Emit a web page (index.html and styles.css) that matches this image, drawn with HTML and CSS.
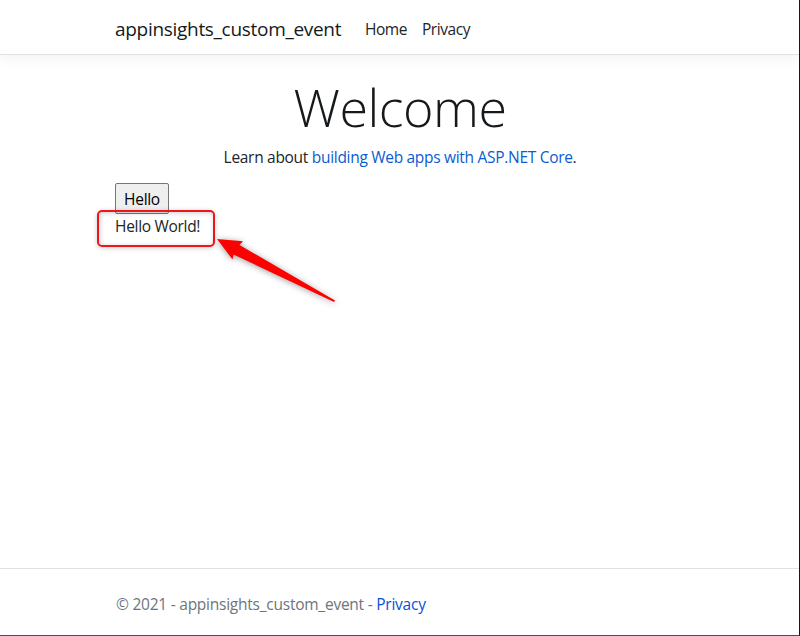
FILE: index.html
```html
<!DOCTYPE html>
<html lang="en">

<head>
    <meta charset="utf-8" />
    <meta name="viewport" content="width=device-width, initial-scale=1.0" />
    <title>Home page - appinsights_custom_event</title>
    <link rel="stylesheet" href="styles.css">
</head>

<body>
    <header class="navbar">
        <nav class="container">
            <a class="navbar-brand" href="#">appinsights_custom_event</a>
            <a class="nav-link nav-home" href="#">Home</a>
            <a class="nav-link" href="#">Privacy</a>
        </nav>
    </header>

    <main class="container">
        <div class="intro">
            <h1>Welcome</h1>
            <p>Learn about <a href="#">building Web apps with ASP.NET Core</a>.</p>
        </div>
        <button class="hello-button" type="button">Hello</button>
        <div class="message">
            <span class="message-text">Hello World!</span>
            <div class="highlight"></div>
            <svg class="arrow" width="130" height="80" viewBox="210 230 130 80">
                <path d="M217 239 L243 241.200 L239.500 245 L335 300.500 L334 302 L233.500 254.500 L232.500 259.500 Z" fill="#ff0000" />
            </svg>
        </div>
    </main>

    <footer class="footer">
        <div class="container">
            <span class="footer-text">&copy; 2021 - appinsights_custom_event - <a href="#">Privacy</a></span>
        </div>
    </footer>
</body>

</html>
```

FILE: styles.css
```css
* {
    box-sizing: border-box;
}

body {
    margin: 0;
    height: 636px;
    display: flex;
    flex-direction: column;
    overflow: hidden;
    font-family: "Open Sans", "Noto Sans", sans-serif;
    font-size: 15.5px;
    line-height: 24px;
    letter-spacing: -0.3px;
    color: #212529;
    background-color: #fff;
    border-right: 1px solid #17171a;
    border-bottom: 1px solid #4c4c50;
}

a {
    color: #0b5bd3;
    text-decoration: none;
}

.container {
    width: 569px;
    margin: 0 auto;
}

.navbar {
    height: 55px;
    border-bottom: 1px solid #dee2e6;
    box-shadow: 0 4px 12px rgba(0, 0, 0, 0.05);
}

.navbar .container {
    height: 57px;
    display: flex;
    align-items: center;
}

.navbar-brand {
    width: 250px;
    font-size: 19px;
    color: #16191c;
}

.nav-link {
    color: #212529;
    letter-spacing: -0.45px;
}

.nav-home {
    width: 57px;
}

main {
    flex: 1;
}

.intro {
    padding-left: 1px;
    text-align: center;
}

h1 {
    margin: 20px 0 6px;
    font-size: 52px;
    font-weight: 300;
    line-height: 64px;
    letter-spacing: -0.5px;
    color: #16191c;
}

.intro p {
    margin: 0 0 14px;
}

.hello-button {
    display: block;
    width: 54px;
    height: 31px;
    padding: 0;
    font-family: inherit;
    font-size: 15.5px;
    line-height: 24px;
    letter-spacing: -0.3px;
    color: #000;
    background-color: #efefef;
    border: 1px solid #767676;
    border-radius: 2px;
}

.message {
    position: relative;
}

/* callout drawn over the message */
.highlight {
    position: absolute;
    left: -18px;
    top: -4px;
    width: 118px;
    height: 37px;
    border: 2px solid #ee151b;
    border-radius: 5px;
    box-shadow: 0 1px 5px rgba(0, 0, 0, 0.2), inset 1px 1px 5px rgba(0, 0, 0, 0.2);
}

.arrow {
    position: absolute;
    left: 95px;
    top: 16px;
    overflow: visible;
    filter: drop-shadow(0 1px 3px rgba(0, 0, 0, 0.4));
}

.footer {
    height: 67px;
    border-top: 1px solid #dee2e6;
    color: #6c757d;
}

.footer .container {
    padding-top: 23px;
    padding-left: 1px;
}

.footer-text {
    letter-spacing: -0.24px;
}

.footer a {
    color: #0b4fd6;
}
```
